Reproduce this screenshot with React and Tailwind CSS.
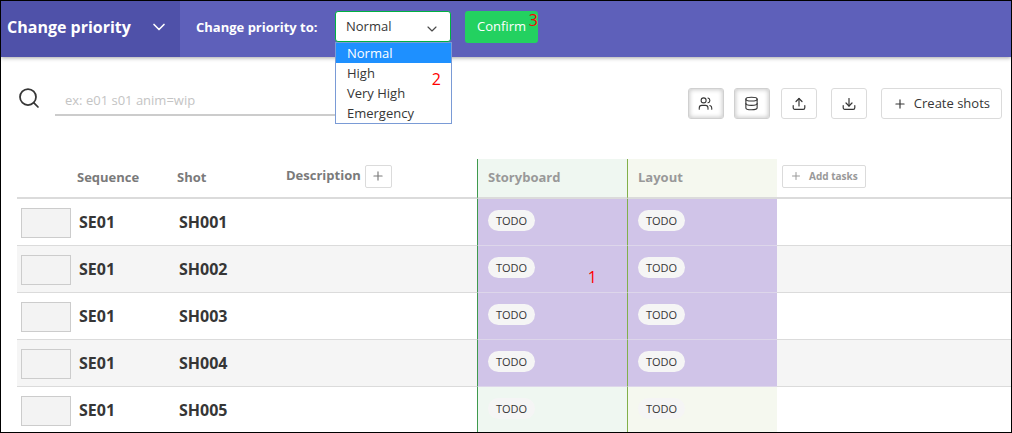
import React from "react";
import { ChevronDown, Database, Plus, Search, Users } from "lucide-react";

const PRIORITIES = ["Normal", "High", "Very High", "Emergency"];

const SHOTS = [
  { sequence: "SE01", name: "SH001", selected: true },
  { sequence: "SE01", name: "SH002", selected: true },
  { sequence: "SE01", name: "SH003", selected: true },
  { sequence: "SE01", name: "SH004", selected: true },
  { sequence: "SE01", name: "SH005", selected: false },
];

function Marker({ className, children }) {
  return (
    <span className={`pointer-events-none absolute text-[16px] leading-4 text-[#ff0000] ${className}`}>
      {children}
    </span>
  );
}

function TrayIcon({ arrow }) {
  return (
    <svg width="14" height="14" viewBox="0 0 14 14" fill="none" stroke="currentColor" strokeWidth="1.2" strokeLinecap="round" strokeLinejoin="round" aria-hidden="true">
      <path d="M1.2 8.5v2.3a1.6 1.6 0 0 0 1.6 1.6h8.4a1.6 1.6 0 0 0 1.6-1.6V8.5" />
      <path d={arrow} />
      <path d="M7 1.5v7.5" />
    </svg>
  );
}

function ActionBar() {
  return (
    <header className="relative z-10 flex h-14 shrink-0 bg-[#5e60ba] text-white shadow-[0_1px_4px_rgba(0,0,0,0.35)]">
      <button type="button" className="flex w-[179px] shrink-0 items-center justify-between bg-[#4f51a9] pr-[11px] pb-1 pl-[6px] text-[16px] font-bold">
        Change priority
        <ChevronDown size={20} strokeWidth={2} />
      </button>
      <div className="flex items-start pt-[10px] pl-4">
        <label htmlFor="priority" className="w-[139px] text-[13px] leading-8 font-bold whitespace-nowrap">
          Change priority to:
        </label>
        <div className="relative">
          <select
            id="priority"
            defaultValue="Normal"
            className="block h-[31px] w-[116px] appearance-none rounded-[3px] border border-[#00b242] bg-white pl-[10px] text-[13px] text-[#363636] outline-none"
          >
            {PRIORITIES.map((p) => (
              <option key={p}>{p}</option>
            ))}
          </select>
          <ChevronDown size={16} strokeWidth={1.75} className="pointer-events-none absolute top-[10px] right-[11px] text-[#4a4a4a]" />
          <ul role="listbox" aria-label="Priority" className="absolute top-full left-0 w-[117px] border border-[#7a9bd6] bg-white text-[13px] leading-5 text-[#363636]">
            {PRIORITIES.map((p, i) => (
              <li key={p} role="option" aria-selected={i === 0} className={i === 0 ? "bg-[#1e90ff] pl-[11px] text-white" : "pl-[11px]"}>
                {p}
              </li>
            ))}
            <li aria-hidden="true">
              <Marker className="top-7 right-[10px]">2</Marker>
            </li>
          </ul>
        </div>
        <div className="relative ml-[14px]">
          <button type="button" className="h-8 w-[73px] rounded-[3px] bg-[#23d160] text-[13px] text-white">
            Confirm
          </button>
          <Marker className="top-px right-0">3</Marker>
        </div>
      </div>
    </header>
  );
}

function ToolButton({ label, pressed, children }) {
  return (
    <button
      type="button"
      aria-label={label}
      aria-pressed={pressed}
      className={
        pressed
          ? "flex h-[31px] w-9 items-center justify-center rounded-[3px] border border-[#d0d0d0] bg-white shadow-[inset_0_0_4px_1px_rgba(0,0,0,0.2)]"
          : "flex h-[31px] w-9 items-center justify-center rounded-[3px] border border-[#dbdbdb] bg-white"
      }
    >
      {children}
    </button>
  );
}

function Toolbar() {
  return (
    <div className="flex h-[102px] shrink-0 items-start justify-between pt-[31px] pr-[9px] pl-4 text-[#363636]">
      <div className="flex items-start">
        <label htmlFor="search" className="flex w-[38px]">
          <Search size={24} strokeWidth={1.75} className="-mt-0.5" aria-label="Search" />
        </label>
        <input
          id="search"
          type="text"
          placeholder="ex: e01 s01 anim=wip"
          className="h-7 w-[385px] border-b-2 border-[#cccccc] bg-transparent pb-0.5 pl-[10px] text-[13px] outline-none placeholder:text-[#c4c4c4]"
        />
      </div>
      <div className="flex items-start">
        <div className="flex gap-[10px]">
          <ToolButton label="Show assignations" pressed>
            <Users size={15} strokeWidth={1.75} />
          </ToolButton>
          <ToolButton label="Show infos" pressed>
            <Database size={15} strokeWidth={1.75} />
          </ToolButton>
        </div>
        <div className="ml-[11px] flex gap-[14px]">
          <ToolButton label="Import">
            <TrayIcon arrow="M4 4.5l3-3 3 3" />
          </ToolButton>
          <ToolButton label="Export">
            <TrayIcon arrow="M4 6l3 3 3-3" />
          </ToolButton>
          <button type="button" className="flex h-[31px] items-center gap-[7px] rounded-[3px] border border-[#dbdbdb] bg-white px-[11px] text-[13px] whitespace-nowrap">
            <Plus size={14} />
            Create shots
          </button>
        </div>
      </div>
    </div>
  );
}

function Todo() {
  return (
    <span className="block h-[21px] w-fit rounded-full bg-[#f5f5f5] px-2 text-[11px] leading-[21px] text-[#363636]">
      TODO
    </span>
  );
}

function ShotTable() {
  const th = "border-b-2 border-[#dbdbdb] p-0 text-left align-middle font-bold";
  return (
    <table className="ml-4 w-[calc(100%-16px)] table-fixed border-separate border-spacing-0 text-[13px]">
      <colgroup>
        <col className="w-[60px]" />
        <col className="w-[100px]" />
        <col className="w-[109px]" />
        <col className="w-[191px]" />
        <col className="w-[150px]" />
        <col className="w-[150px]" />
        <col />
      </colgroup>
      <thead>
        <tr className="h-10 text-[#7a7a7a]">
          <th className={th} aria-label="Preview" />
          <th className={th}>Sequence</th>
          <th className={th}>Shot</th>
          <th className={th}>
            <div className="flex items-center gap-1 pb-1">
              Description
              <button type="button" aria-label="Add column" className="flex h-[23px] w-[27px] items-center justify-center rounded-[2px] border border-[#dbdbdb] bg-white">
                <Plus size={14} />
              </button>
            </div>
          </th>
          <th className={`${th} border-l border-l-[#3f9a4d] bg-[#eff7f1] text-[#999999]`}>
            <span className="pl-[10px]">Storyboard</span>
          </th>
          <th className={`${th} border-l border-l-[#82b04a] bg-[#f5f8ef] text-[#999999]`}>
            <span className="pl-[10px]">Layout</span>
          </th>
          <th className={th}>
            <div className="pb-1 pl-[5px]">
              <button type="button" className="flex h-[23px] items-center gap-[7px] rounded-[2px] border border-[#dbdbdb] bg-white px-[7px] text-[10px] font-bold text-[#999999]">
                <Plus size={12} />
                Add tasks
              </button>
            </div>
          </th>
        </tr>
      </thead>
      <tbody className="text-[#363636]">
        {SHOTS.map((shot, i) => {
          const line = shot.selected ? "border-b-[#ddd6ea]" : "border-b-[#dbdbdb]";
          return (
            <tr key={shot.name} className={i % 2 ? "h-[47px] bg-[#f5f5f5]" : "h-[47px] bg-white"}>
              <td className="border-b border-[#dbdbdb] p-0 pt-0.5 pl-1">
                <div className="h-[30px] w-[50px] border border-[#cccccc] bg-[#f3f3f3]" />
              </td>
              <td className="border-b border-[#dbdbdb] p-0 pl-0.5 text-[16px] font-bold">{shot.sequence}</td>
              <td className="border-b border-[#dbdbdb] p-0 pl-0.5 text-[16px] font-bold">{shot.name}</td>
              <td className="border-b border-[#dbdbdb] p-0" />
              <td className={`relative border-b border-l p-0 pb-[3px] pl-[10px] ${line} border-l-[#3f9a4d] ${shot.selected ? "bg-[#d0c4e8]" : "bg-[#eff7f1]"}`}>
                <Todo />
                {i === 1 && <Marker className="top-[23px] right-[30px]">1</Marker>}
              </td>
              <td className={`border-b border-l p-0 pb-[3px] pl-[10px] ${line} border-l-[#82b04a] ${shot.selected ? "bg-[#d0c4e8]" : "bg-[#f5f8ef]"}`}>
                <Todo />
              </td>
              <td className="border-b border-[#dbdbdb] p-0" />
            </tr>
          );
        })}
      </tbody>
    </table>
  );
}

export default function App() {
  return (
    <main className="flex h-screen flex-col overflow-hidden border border-black bg-white font-['Open_Sans','Noto_Sans',sans-serif]">
      <ActionBar />
      <Toolbar />
      <ShotTable />
    </main>
  );
}
